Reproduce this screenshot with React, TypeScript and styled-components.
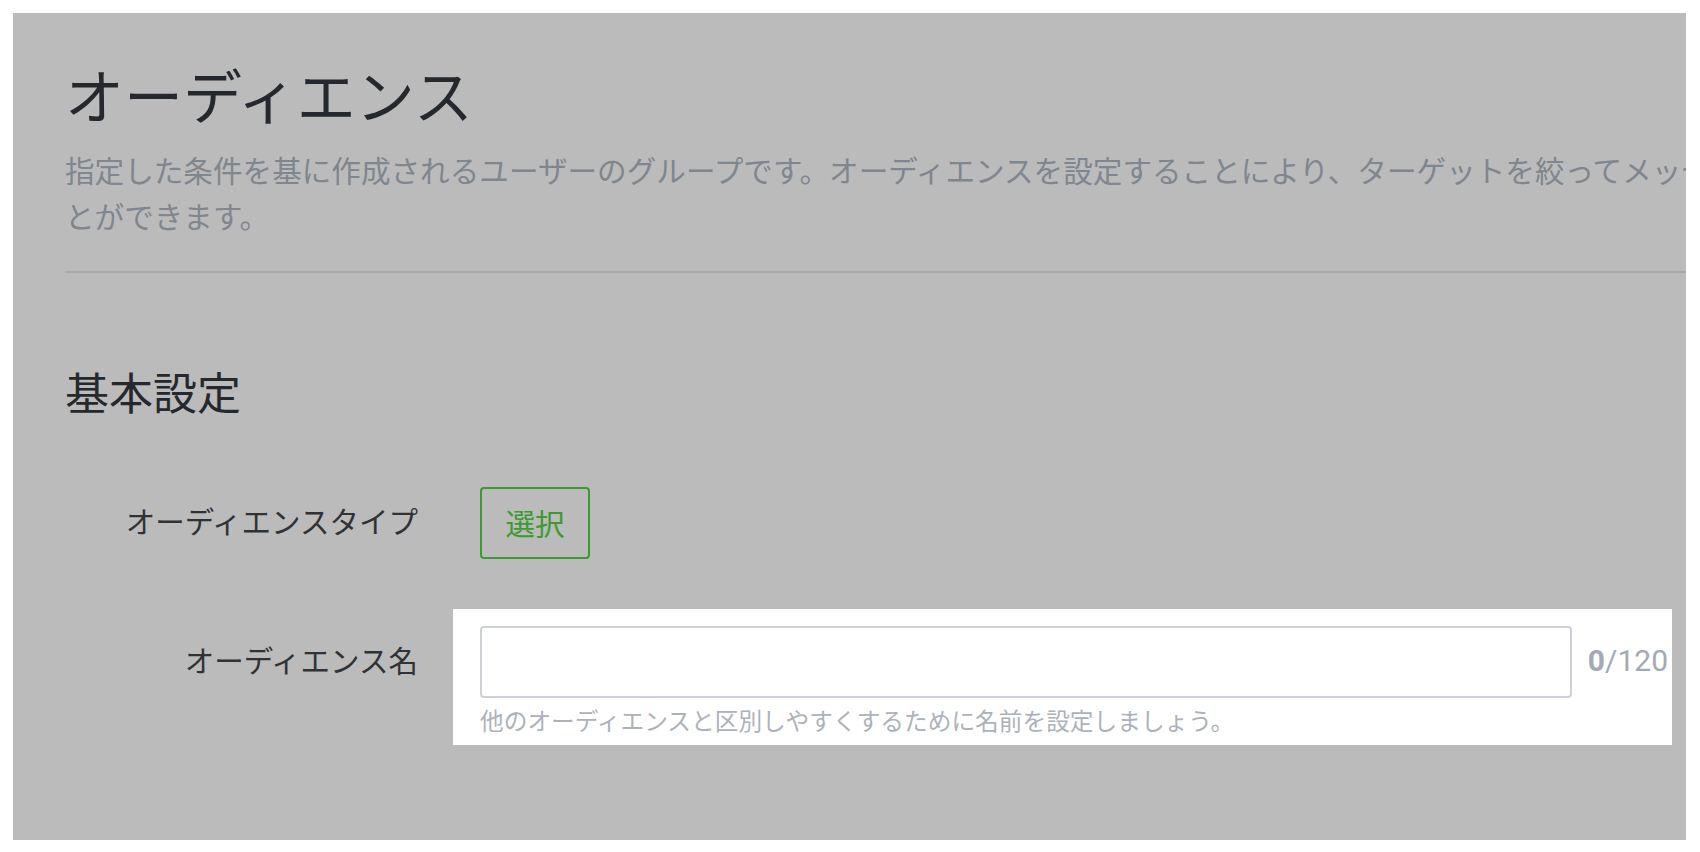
import React from "react";
import styled, { createGlobalStyle } from "styled-components";

const GlobalStyle = createGlobalStyle`
  html, body {
    margin: 0;
    padding: 0;
    background: #ffffff;
  }
  body {
    font-family: "Noto Sans CJK JP", "Noto Sans", sans-serif;
  }
`;

const Page = styled.div`
  padding: 13px 14px 12px 13px;
`;

const Overlay = styled.section`
  height: 827px;
  background: #bbbbbb;
  overflow: hidden;
  padding: 47px 0 0 52px;
  box-sizing: border-box;
`;

const Title = styled.h1`
  margin: 0;
  font-size: 59px;
  line-height: 68px;
  font-weight: 400;
  color: #25282c;
`;

const Description = styled.p`
  margin: 19px 0 0;
  width: 1950px;
  font-size: 29.6px;
  line-height: 46px;
  color: #80868e;
  white-space: nowrap;
`;

const Divider = styled.hr`
  margin: 32px 0 0;
  border: 0;
  height: 2px;
  background: #aaaaaa;
`;

const SectionTitle = styled.h2`
  margin: 90px 0 0;
  font-size: 44px;
  line-height: 57px;
  font-weight: 400;
  color: #25282c;
`;

const Form = styled.div`
  margin-top: 67px;
  display: grid;
  grid-template-columns: 353px auto;
  column-gap: 35px;
  row-gap: 50px;
  justify-content: start;
  align-items: start;
`;

const LabelCell = styled.div<{ $offset?: number }>`
  padding-top: ${({ $offset = 0 }) => $offset}px;
`;

const Label = styled.div`
  height: 72px;
  box-sizing: border-box;
  padding-bottom: 6px;
  display: flex;
  align-items: center;
  justify-content: flex-end;
  font-size: 29.5px;
  color: #303236;
  white-space: nowrap;
`;

const Field = styled.div<{ $highlight?: boolean }>`
  padding: ${({ $highlight }) => ($highlight ? "17px 4px 11px 27px" : "0 0 0 27px")};
  background: ${({ $highlight }) => ($highlight ? "#ffffff" : "transparent")};
  width: ${({ $highlight }) => ($highlight ? "1188px" : "auto")};
`;

const SelectButton = styled.button`
  width: 110px;
  height: 72px;
  box-sizing: border-box;
  border: 2px solid #3c9a30;
  border-radius: 4px;
  background: transparent;
  color: #3c9a30;
  font-family: "Noto Sans CJK JP", "Noto Sans", sans-serif;
  font-size: 29.5px;
  padding: 0 0 3px;
  cursor: pointer;
`;

const InputRow = styled.div`
  display: flex;
  align-items: center;
  gap: 16px;
`;

const TextInput = styled.input`
  width: 1092px;
  height: 72px;
  box-sizing: border-box;
  border: 2px solid #cdd1d7;
  border-radius: 4px;
  background: #ffffff;
  font-size: 29px;
  padding: 0 16px;
  outline: none;
`;

const Counter = styled.div`
  font-family: Roboto, "Liberation Sans", sans-serif;
  font-size: 30px;
  color: #a4aab2;
  white-space: nowrap;
  margin-bottom: 4px;

  b {
    font-weight: 700;
  }
`;

const Hint = styled.div`
  margin-top: 8px;
  font-size: 23.7px;
  line-height: 28px;
  color: #adb2b9;
  white-space: nowrap;
`;

export default function App() {
  return (
    <>
      <GlobalStyle />
      <Page>
        <Overlay>
          <Title>オーディエンス</Title>
          <Description>
            指定した条件を基に作成されるユーザーのグループです。オーディエンスを設定することにより、ターゲットを絞ってメッセージを配信するこ
            <br />
            とができます。
          </Description>
          <Divider />
          <SectionTitle>基本設定</SectionTitle>
          <Form>
            <LabelCell>
              <Label>オーディエンスタイプ</Label>
            </LabelCell>
            <Field>
              <SelectButton type="button">選択</SelectButton>
            </Field>
            <LabelCell $offset={17}>
              <Label>オーディエンス名</Label>
            </LabelCell>
            <Field $highlight>
              <InputRow>
                <TextInput type="text" />
                <Counter>
                  <b>0</b>/120
                </Counter>
              </InputRow>
              <Hint>他のオーディエンスと区別しやすくするために名前を設定しましょう。</Hint>
            </Field>
          </Form>
        </Overlay>
      </Page>
    </>
  );
}
